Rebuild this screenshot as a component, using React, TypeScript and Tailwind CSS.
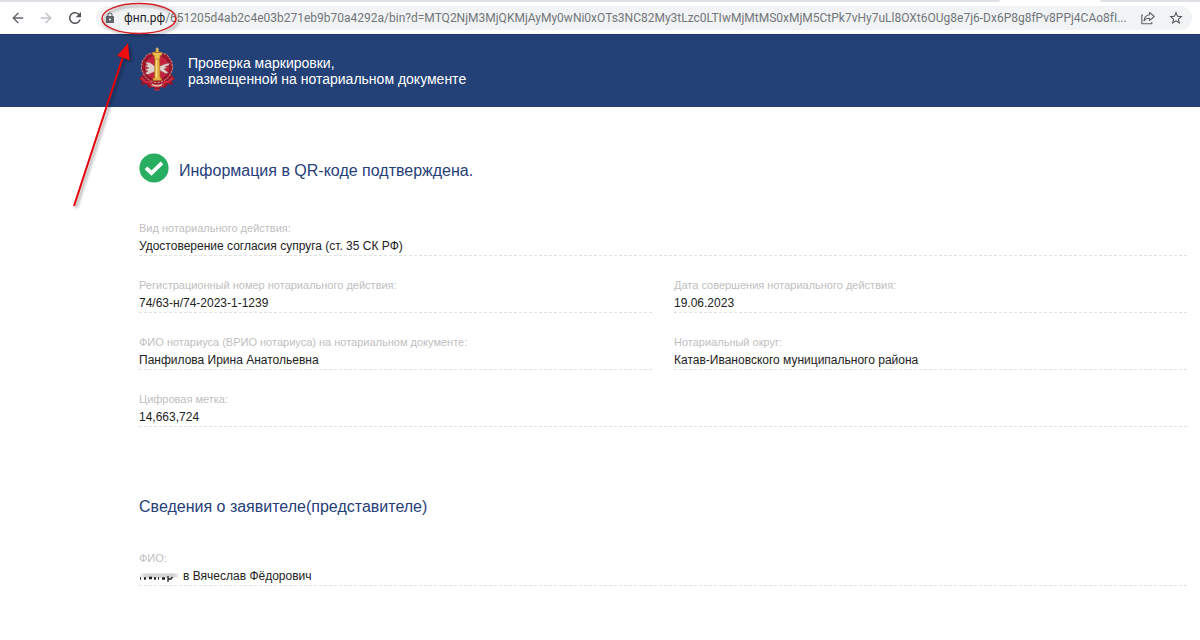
import { ArrowLeft, ArrowRight } from "lucide-react";
import { MdLock, MdRefresh, MdStarBorder } from "react-icons/md";
import type { ReactNode } from "react";

const URL_PATH =
  "/651205d4ab2c4e03b271eb9b70a4292a/bin?d=MTQ2NjM3MjQKMjAyMy0wNi0xOTs3NC82My3tLzc0LTIwMjMtMS0xMjM5CtPk7vHy7uLl8OXt6OUg8e7j6-Dx6P8g8fPv8PPj4CAo8fI...";

type FieldProps = {
  label: string;
  children: ReactNode;
  wide?: boolean;
};

const Field = ({ label, children, wide }: FieldProps) => (
  <div
    className={`border-b border-dashed border-[#e2e2e2] ${
      wide ? "col-span-2" : ""
    }`}
  >
    <dt className="text-[11px] leading-[18px] text-[#c0c0c0]">{label}</dt>
    <dd className="text-[12px] leading-[18px] text-[#222]">{children}</dd>
  </div>
);

const ShareIcon = () => (
  <svg
    viewBox="0 0 16 16"
    className="size-4"
    fill="none"
    stroke="#5f6368"
    strokeWidth="1.1"
    strokeLinejoin="round"
  >
    <path d="M3 5H1.800v8.800h10V12" />
    <path d="M9.500 2.500 14.300 6.500 9.500 10.500V8.300C7 8.200 5.300 9 4 11c.3-3.500 2.200-5.700 5.500-6.200z" />
  </svg>
);

const Emblem = () => (
  <svg viewBox="0 0 38 46" className="h-[46px] w-[38px] shrink-0">
    <path
      d="M5 27 1 32l3 2-1 4 5-1 3 4 4-1 4 4 4-4 4 1 3-4 5 1-1-4 3-2-4-5z"
      fill="#96172a"
    />
    <path
      d="M19 4.500c3 0 4 1.500 6 2s4 .5 5 2.500 2.500 3 3.500 5 .5 4 1 6-.5 4-1.500 6-2 4-4 5.500-5 4-10 4-8-2.500-10-4-3-3.500-4-5.500S3 22 3.500 20s0-4 1-6S7 11 8 9s3-2 5-2.500 3-2 6-2z"
      fill="#9f1830"
      stroke="#d39482"
      strokeWidth="1"
      strokeDasharray="2.500 1"
    />
    <circle cx="19" cy="20.500" r="12.800" fill="#c5213f" stroke="#7d1021" />
    <path
      d="M7.500 15.500c3-1 6 .5 9.500 4v5l-7 3-3-1 3-2.500-3-1.500 4-1.500-4-2 2.500-1z"
      fill="#e0d0cc"
      stroke="#8e5a58"
      strokeWidth=".5"
    />
    <path
      d="M21 19.500l6-2.500 5-1-1.500 2.500-3.500 1 2 1-3 1.500 4.500 4-3 .5-6.500-3.500z"
      fill="#e0d0cc"
      stroke="#8e5a58"
      strokeWidth=".5"
    />
    <path
      d="M17 11h4.500l.5 20h1.500v2.500h-8.500V31h1.500z"
      fill="#e6ae42"
      stroke="#a86c1d"
      strokeWidth=".6"
    />
    <path d="M18.500 12v18.500" stroke="#ffe28b" strokeWidth="1.300" />
    <path
      d="M14.500 5.500h9.500l-.5 3h-1.500v3.500h-5.500V8.500h-1.500zM18 2.500h2.500v3H18z"
      fill="#edbc54"
      stroke="#a86c1d"
      strokeWidth=".6"
    />
    <path d="M17.500 2h3.500M19.200.500v3.500" stroke="#f1cc73" strokeWidth=".9" />
    <path
      d="M3 31c3 1 3 5 7 4s1 4 5 4M35 31c-3 1-3 5-7 4s-1 4-5 4"
      fill="none"
      stroke="#cf2b41"
      strokeWidth="2"
    />
    <path
      d="M13 35.500c2.500 2.500 9.500 2.500 12 0l-1 3.500c-2 1.500-8 1.500-10 0z"
      fill="#e3b3a4"
      stroke="#a5162c"
      strokeWidth=".6"
    />
    <path d="M16 42.500l3 1 3-1" stroke="#c52f41" fill="none" />
  </svg>
);

const CheckBadge = () => (
  <svg viewBox="0 0 30 30" className="size-[30px] shrink-0">
    <circle cx="15" cy="15" r="14.600" fill="#27ae60" />
    <path
      d="m7 14.800 5.500 5.200L23 9.800"
      fill="none"
      stroke="#fff"
      strokeWidth="3.800"
    />
  </svg>
);

// Hides the applicant's surname
const Redacted = () => (
  <svg viewBox="0 0 40 14" className="h-[14px] w-10 shrink-0">
    <defs>
      <filter id="smudge" x="-20%" y="-150%" width="140%" height="400%">
        <feGaussianBlur stdDeviation="2" />
      </filter>
      <filter id="soften" x="-20%" y="-50%" width="140%" height="200%">
        <feGaussianBlur stdDeviation=".6" />
      </filter>
    </defs>
    <path
      d="M3 7h28l7-1"
      stroke="#c4c4c4"
      strokeWidth="5"
      fill="none"
      filter="url(#smudge)"
    />
    <g filter="url(#soften)" stroke="#222" fill="none">
      <path
        d="M1 9.500h1M5 9.500h2M10 9h3M15 9.500h2M19 9.500h1M23 9.500h3"
        strokeWidth="2.500"
      />
      <path d="M29 7v6M29 10h3l1.500-2" strokeWidth="1.300" />
    </g>
  </svg>
);

// Marker that points at the site address
const Callout = () => (
  <svg
    viewBox="0 0 190 215"
    className="pointer-events-none absolute top-0 left-0 h-[215px] w-[190px]"
  >
    <defs>
      <filter id="callout-shadow" x="-20%" y="-20%" width="140%" height="140%">
        <feDropShadow
          dx="2"
          dy="2"
          stdDeviation="1.500"
          floodColor="#000"
          floodOpacity=".4"
        />
      </filter>
    </defs>
    <g filter="url(#callout-shadow)">
      <ellipse
        cx="139"
        cy="18.500"
        rx="37"
        ry="15"
        fill="none"
        stroke="#d0222b"
        strokeWidth="1.500"
      />
      <path d="M74 206 122.500 58" stroke="#e3000b" strokeWidth="2" />
      <path d="M128 43 129.500 60.500 123 57.500 117 56z" fill="#f00a0a" />
    </g>
  </svg>
);

const BrowserBar = () => (
  <div className="bg-white">
    {/* bottom edge of the tab strip, open under the active tab */}
    <div className="flex h-0.5 justify-between">
      <div className="w-5/6 rounded-br-full bg-[#dee1e6]" />
      <div className="w-1/12 rounded-bl-full bg-[#dee1e6]" />
    </div>
    <div className="flex h-8 items-center pr-2 pl-2.5">
      <button aria-label="Назад" className="mr-3 text-[#5f6368]">
        <ArrowLeft size={16} strokeWidth={2} />
      </button>
      <button aria-label="Вперёд" className="mr-3 text-[#bdc1c6]">
        <ArrowRight size={16} strokeWidth={2} />
      </button>
      <button aria-label="Обновить" className="mr-3 text-[#505458]">
        <MdRefresh size={18} />
      </button>
      <div className="flex h-6 min-w-0 flex-1 items-center rounded-full bg-[#f1f3f4] px-2 font-['Roboto',sans-serif] text-[12px]">
        <MdLock size={12} className="mr-2 shrink-0 text-[#5f6368]" />
        <label htmlFor="address" className="text-[#202124]">
          фнп.рф
        </label>
        <input
          id="address"
          type="text"
          defaultValue={URL_PATH}
          className="min-w-0 flex-1 bg-transparent text-[#72767a] outline-none"
        />
        <button aria-label="Поделиться" className="mr-3 ml-2">
          <ShareIcon />
        </button>
        <button aria-label="Добавить в закладки" className="text-[#505458]">
          <MdStarBorder size={16} />
        </button>
      </div>
    </div>
  </div>
);

const App = () => {
  return (
    <div className="relative min-h-screen bg-white font-['Liberation_Sans',Arial,sans-serif]">
      <BrowserBar />
      <header className="flex items-start gap-3 border-t border-[#1c3767] bg-[#234177] pt-3 pb-3.5 pl-[138px] text-white">
        <Emblem />
        <p className="pt-2 text-[14px] leading-4">
          Проверка маркировки,
          <br />
          размещенной на нотариальном документе
        </p>
      </header>

      <main className="pt-[46px] pr-[13px] pb-10 pl-[139px]">
        <div className="flex items-end gap-2.5">
          <CheckBadge />
          <h1 className="text-[16px] leading-6 text-[#26407a]">
            Информация в QR-коде подтверждена.
          </h1>
        </div>

        <dl className="mt-9 grid grid-cols-2 gap-x-[22px] gap-y-5">
          <Field label="Вид нотариального действия:" wide>
            Удостоверение согласия супруга (ст. 35 СК РФ)
          </Field>
          <Field label="Регистрационный номер нотариального действия:">
            74/63-н/74-2023-1-1239
          </Field>
          <Field label="Дата совершения нотариального действия:">
            19.06.2023
          </Field>
          <Field label="ФИО нотариуса (ВРИО нотариуса) на нотариальном документе:">
            Панфилова Ирина Анатольевна
          </Field>
          <Field label="Нотариальный округ:">
            Катав-Ивановского муниципального района
          </Field>
          <Field label="Цифровая метка:" wide>
            14,663,724
          </Field>
        </dl>

        <h2 className="mt-[68px] text-[16px] leading-6 text-[#26407a]">
          Сведения о заявителе(представителе)
        </h2>
        <dl className="mt-[30px] grid grid-cols-2">
          <Field label="ФИО:" wide>
            <span className="flex items-center gap-1">
              <Redacted />в Вячеслав Фёдорович
            </span>
          </Field>
        </dl>
      </main>
      <Callout />
    </div>
  );
};

export default App;
